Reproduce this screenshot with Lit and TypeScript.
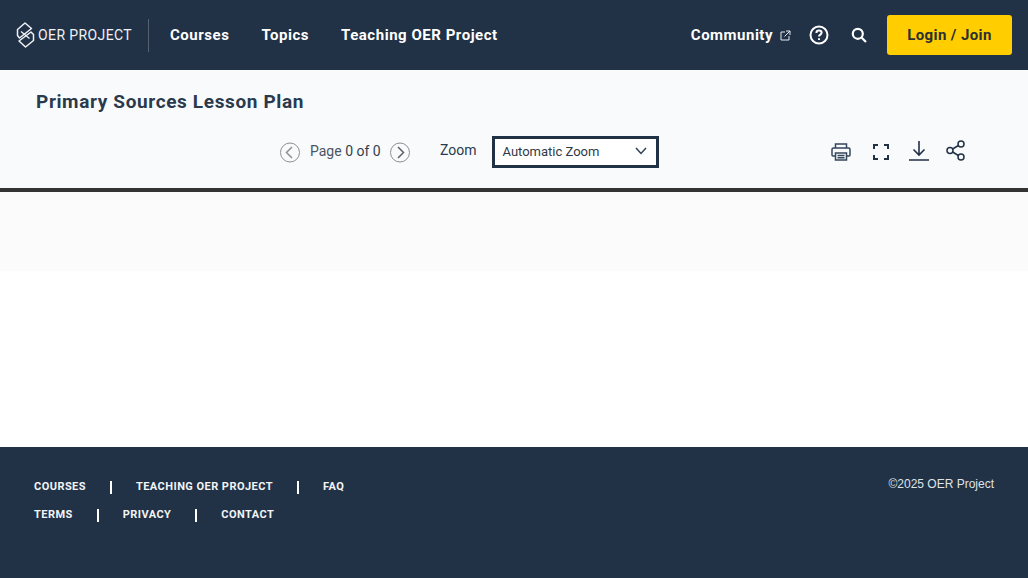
import { LitElement, html, css } from "lit";
import { customElement } from "lit/decorators.js";

@customElement("app-root")
export class AppRoot extends LitElement {
  static styles = css`
    :host { display: block; width: 1028px; height: 578px; overflow: hidden; font-family: Roboto, "Liberation Sans", sans-serif; background: #fff; }
    * { box-sizing: border-box; }
    svg { display: block; flex: none; }
    .nav { height: 70px; background: #213146; display: flex; align-items: center; padding: 0 16px; color: #fff; }
    .logo { display: flex; align-items: center; width: 132px; gap: 3px; }
    .logo span { font-size: 14px; font-weight: 400; letter-spacing: .4px; color: #f0f2f5; white-space: nowrap; }
    .sep { width: 1px; height: 33px; background: #56636f; margin-right: 21px; }
    .links { display: flex; gap: 32px; font-size: 15px; font-weight: 700; letter-spacing: .53px; }
    .right { margin-left: auto; display: flex; align-items: center; }
    .community { font-size: 15px; font-weight: 700; letter-spacing: .5px; margin-right: 7px; }
    .ext { margin-right: 18px; }
    .help { margin-right: 22px; }
    .search { margin-right: 20px; }
    .login { width: 125px; height: 40px; border-radius: 3px; background: #ffcd00; color: #2b2f33; font-size: 15px; font-weight: 700; letter-spacing: .4px; display: flex; align-items: center; justify-content: center; }
    .tools { height: 118px; background: #f8fafc; padding: 20px 0 0 36px; color: #213146; }
    h1 { margin: 0; font-size: 19px; line-height: 23px; font-weight: 700; letter-spacing: .63px; color: #2a3a4c; }
    .controls { display: flex; align-items: center; margin-top: 23px; padding-left: 244px; height: 32px; }
    .page { font-size: 14px; line-height: 14px; color: #4a5563; margin: -2px 9px 0 10px; width: 71px; white-space: nowrap; }
    .page b { font-weight: 400; color: #333f4d; font-size: 14px; }
    .zoom { font-size: 14px; line-height: 14px; color: #2a3a4c; margin: -4px 15px 0 30px; }
    .select { width: 167px; height: 32px; border: 3px solid #213146; background: #fff; display: flex; align-items: center; justify-content: space-between; padding: 0 9px 2px 8px; font-size: 13px; color: #2f3a46; }
    .actions { display: flex; align-items: center; margin-left: 172px; }
    .actions .a1 { margin-right: 22px; }
    .actions .a2 { margin-right: 20px; }
    .actions .a3 { margin-right: 17px; margin-top: -3px; }
    .actions .a4 { margin-top: -3px; }
    .bar { height: 4px; background: #333; }
    .viewer { height: 79px; background: #fbfbfb; }
    .blank { height: 176px; background: #fff; }
    .footer { height: 131px; background: #213146; color: #f2f4f6; padding: 33px 34px 0; display: flex; justify-content: space-between; }
    .rows { display: flex; flex-direction: column; gap: 14px; }
    .row { display: flex; align-items: center; height: 14px; font-size: 11px; font-weight: 700; letter-spacing: .45px; line-height: 14px; }
    .row i { width: 2px; height: 13px; background: #fff; margin: 0 24px; }
    .copy { font-family: "Liberation Sans", Arial, sans-serif; font-size: 12px; color: #dfe3e8; line-height: 14px; margin-top: -3px; }
  `;

  render() {
    return html`
      <div class="nav">
        <div class="logo">
          <svg width="19" height="26" viewBox="0 0 19 26" fill="none" stroke="#f0f2f5" stroke-width="1.5" stroke-linejoin="round">
            <path d="M9 1 15.5 6.5 3.5 16 1.5 13.5 1.5 7.5Z"/>
            <path d="M9.5 25 3 19 15 10 17.5 12.5 17.5 18.5Z"/>
            <path d="M5 9.5 13.5 16.5" stroke-width="1.3"/>
          </svg>
          <span>OER PROJECT</span>
        </div>
        <div class="sep"></div>
        <div class="links"><span>Courses</span><span>Topics</span><span>Teaching OER Project</span></div>
        <div class="right">
          <span class="community">Community</span>
          <svg class="ext" width="11" height="11" viewBox="0 0 11 11" fill="none" stroke="#e6e9ed" stroke-width="1">
            <path d="M5 2H1V10H9V6M6 1H10V5M10 1 4.5 6.5"/>
          </svg>
          <svg class="help" width="20" height="20" viewBox="0 0 20 20" fill="none" stroke="#fff" stroke-width="2">
            <circle cx="10" cy="10" r="8.5"/>
            <path d="M7.4 8C7.4 6.4 8.6 5.6 10 5.6 11.5 5.6 12.6 6.5 12.6 7.8 12.6 9.6 10 9.7 10 11.6"/>
            <path d="M10 13.2V15"/>
          </svg>
          <svg class="search" width="16" height="16" viewBox="0 0 16 16" fill="none" stroke="#fff" stroke-width="2.2">
            <circle cx="6.8" cy="6.8" r="5"/>
            <path d="M10.5 10.5 15 15"/>
          </svg>
          <div class="login">Login / Join</div>
        </div>
      </div>
      <div class="tools">
        <h1>Primary Sources Lesson Plan</h1>
        <div class="controls">
          <svg width="20" height="21" viewBox="0 0 20 21" fill="none" stroke="#8a9097">
            <circle cx="10" cy="10.5" r="9.5"/>
            <path d="M12 5 6.5 10.5 12 16" stroke-width="1.5"/>
          </svg>
          <span class="page">Page <b>0 of 0</b></span>
          <svg width="20" height="21" viewBox="0 0 20 21" fill="none" stroke="#8a9097">
            <circle cx="10" cy="10.5" r="9.5"/>
            <path d="M8 5 13.5 10.5 8 16" stroke="#59616a" stroke-width="1.5"/>
          </svg>
          <span class="zoom">Zoom</span>
          <div class="select">
            <span>Automatic Zoom</span>
            <svg width="12" height="8" viewBox="0 0 12 8" fill="none" stroke="#33404e" stroke-width="1.5"><path d="M1 1 6 6.5 11 1"/></svg>
          </div>
          <div class="actions">
            <svg class="a1" width="20" height="18" viewBox="0 0 20 18" fill="none" stroke="#33465a" stroke-width="1.5">
              <path d="M4.5 5V1H15.5V5M4.5 13H2C1.4 13 1 12.6 1 12V6.5C1 5.6 1.6 5 2.5 5H17.5C18.4 5 19 5.6 19 6.5V12C19 12.6 18.6 13 18 13H15.5"/>
              <path d="M4.5 10H15.5V17H4.5ZM6.5 12.5H13.5M6.5 14.8H13.5"/>
            </svg>
            <svg class="a2" width="16" height="16" viewBox="0 0 16 16" fill="none" stroke="#213146" stroke-width="2">
              <path d="M1 5V1H5M11 1H15V5M15 11V15H11M5 15H1V11"/>
            </svg>
            <svg class="a3" width="20" height="20" viewBox="0 0 20 20" fill="none" stroke="#213146" stroke-width="1.6">
              <path d="M10 0V14M4.5 8.5 10 14 15.5 8.5M0 19H20"/>
            </svg>
            <svg class="a4" width="19" height="21" viewBox="0 0 19 21" fill="none" stroke="#213146" stroke-width="1.5">
              <circle cx="15" cy="4" r="3"/><circle cx="4" cy="10.5" r="3"/><circle cx="15" cy="17" r="3"/>
              <path d="M6.6 9 12.4 5.5M6.6 12 12.4 15.5"/>
            </svg>
          </div>
        </div>
      </div>
      <div class="bar"></div>
      <div class="viewer"></div>
      <div class="blank"></div>
      <div class="footer">
        <div class="rows">
          <div class="row"><span>COURSES</span><i></i><span>TEACHING OER PROJECT</span><i></i><span>FAQ</span></div>
          <div class="row"><span>TERMS</span><i></i><span>PRIVACY</span><i></i><span>CONTACT</span></div>
        </div>
        <div class="copy">©2025 OER Project</div>
      </div>
    `;
  }
}
